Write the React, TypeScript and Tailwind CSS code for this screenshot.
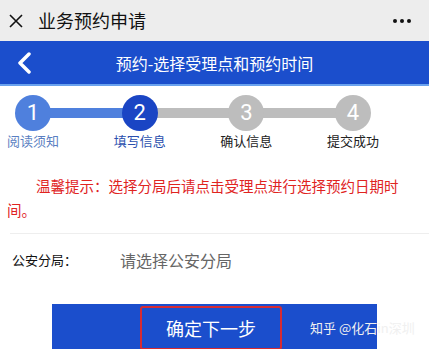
import React from "react";

const font = { fontFamily: '"Noto Sans CJK SC", "Noto Sans", Roboto, sans-serif' };

function Step({ n, label, circle, text }: { n: number; label: string; circle: string; text: string }) {
  return (
    <div className="relative z-10 flex w-[60px] flex-col items-center">
      <div className={`flex h-[36px] w-[36px] items-center justify-center rounded-full text-[22px] leading-none text-white ${circle}`} style={{ fontFamily: "Roboto, sans-serif" }}>
        {n}
      </div>
      <div className={`text-[13px] leading-[20px] ${text}`}>{label}</div>
    </div>
  );
}

export default function App() {
  return (
    <div className="relative h-[349px] w-[429px] overflow-hidden bg-white" style={font}>
      <div className="flex h-[41px] items-center bg-[#ededed] px-[9px]">
        <svg width="14" height="14" viewBox="0 0 14 14" className="mr-[15px]">
          <path d="M1 1 L13 13 M13 1 L1 13" stroke="#111" strokeWidth="1.6" />
        </svg>
        <span className="text-[18px] text-[#111]">业务预约申请</span>
        <div className="ml-auto mr-[9px] flex gap-[3px]">
          <span className="h-[4px] w-[4px] rounded-full bg-[#111]" />
          <span className="h-[4px] w-[4px] rounded-full bg-[#111]" />
          <span className="h-[4px] w-[4px] rounded-full bg-[#111]" />
        </div>
      </div>
      <div className="relative flex h-[45px] items-center justify-center border-b-2 border-[#6aa2ee] bg-[#1b4ecc]">
        <svg width="16" height="22" viewBox="0 0 16 22" className="absolute left-[16px] top-[11px]">
          <path d="M13 2 L4 11 L13 20" stroke="white" strokeWidth="3.5" fill="none" strokeLinecap="round" strokeLinejoin="round" />
        </svg>
        <span className="text-[16px] text-white">预约-选择受理点和预约时间</span>
      </div>
      <div className="relative mt-[9px] flex justify-between pl-[3px] pr-[46px]">
        <div className="absolute left-[33px] top-[13px] h-[10px] w-[107px] bg-[#4f80dd]" />
        <div className="absolute left-[140px] top-[13px] h-[10px] w-[213px] bg-[#bdbdbd]" />
        <Step n={1} label="阅读须知" circle="bg-[#4f80dd]" text="text-[#5b7fc2]" />
        <Step n={2} label="填写信息" circle="bg-[#1a45c4]" text="text-[#2a4fae]" />
        <Step n={3} label="确认信息" circle="bg-[#bdbdbd]" text="text-[#222]" />
        <Step n={4} label="提交成功" circle="bg-[#bdbdbd]" text="text-[#222]" />
      </div>
      <div className="mt-[23px] pl-[7px] pr-[20px] indent-[29px] text-[14.5px] leading-[24px] text-[#e0241f]">
        温馨提示：选择分局后请点击受理点进行选择预约日期时间。
      </div>
      <div className="ml-[10px] mt-[11px] border-t border-[#eeeeee]" />
      <div className="flex h-[52px] items-center">
        <span className="w-[120px] pl-[12px] text-[13px] text-[#111]">公安分局：</span>
        <span className="text-[16px] text-[#666]">请选择公安分局</span>
      </div>
      <div className="ml-[52px] mt-[18px] flex h-[48px] w-[325px] items-center bg-[#1b4ecc]">
        <div className="ml-[88px] flex h-[44px] w-[142px] items-center justify-center rounded-[3px] border-2 border-[#d62b32] text-[18px] text-white">
          确定下一步
        </div>
      </div>
      <div className="absolute left-[310px] top-[318px] text-[13px] text-[#f0f0f0]">知乎 @化石in深圳</div>
    </div>
  );
}
